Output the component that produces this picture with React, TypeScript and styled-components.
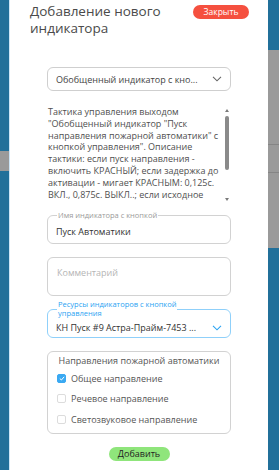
import styled, { createGlobalStyle } from 'styled-components'

const GlobalStyle = createGlobalStyle`
  html, body {
    margin: 0;
    padding: 0;
    background: #21709a;
    font-family: 'Open Sans', 'Noto Sans', sans-serif;
  }
`

const Page = styled.div`
  display: flex;
  width: 279px;
  height: 470px;
  overflow: hidden;
`

const Strip = styled.div<{ $w: number }>`
  display: flex;
  flex-direction: column;
  width: ${({ $w }) => $w}px;
  flex-shrink: 0;
`

const StripSeg = styled.div<{ $h?: number; $grey?: boolean; $line?: boolean }>`
  height: ${({ $h }) => ($h ? `${$h}px` : 'auto')};
  flex: ${({ $h }) => ($h ? '0 0 auto' : '1')};
  background: ${({ $grey }) => ($grey ? '#9a9a9a' : '#21709a')};
  border-top: ${({ $line }) => ($line ? '1px solid #858585' : 'none')};
  box-sizing: border-box;
`

const Panel = styled.div`
  width: 259px;
  flex-shrink: 0;
  background: #fff;
  border-left: 1px solid #cde6f7;
  box-sizing: border-box;
`

const Header = styled.div`
  display: flex;
  justify-content: space-between;
  align-items: flex-start;
  padding: 3px 19px 0 20px;
`

const Title = styled.div`
  font-size: 13.5px;
  line-height: 17px;
  color: #4a4a4a;
`

const CloseButton = styled.button`
  margin-top: 2px;
  width: 56px;
  height: 14px;
  border: none;
  border-radius: 7px;
  background: #f5503f;
  color: #fff;
  font-family: inherit;
  font-size: 8.5px;
  line-height: 14px;
  padding: 0;
`

const Form = styled.div`
  display: flex;
  flex-direction: column;
  padding: 0 37px 0 37px;
`

const Gap = styled.div<{ $h: number }>`
  height: ${({ $h }) => $h}px;
  flex-shrink: 0;
`

const SelectBox = styled.div`
  display: flex;
  align-items: center;
  justify-content: space-between;
  height: 24px;
  box-sizing: border-box;
  border: 1px solid #cfcfcf;
  border-radius: 6px;
  padding: 0 8px 0 8px;
  font-size: 9px;
  color: #444;
`

const SelectText = styled.span`
  white-space: nowrap;
  overflow: hidden;
`

const Chevron = ({ color }: { color: string }) => (
  <svg width="10" height="6" viewBox="0 0 10 6">
    <path d="M1 0.8 L5 4.8 L9 0.8" fill="none" stroke={color} strokeWidth="1.1" />
  </svg>
)

const Tactic = styled.div`
  display: flex;
  height: 95px;
`

const TacticText = styled.div`
  flex: 1;
  overflow: hidden;
  padding: 0 0 0 1px;
  font-size: 9px;
  line-height: 11.8px;
  color: #4f4f4f;
  white-space: nowrap;
`

const Scroll = styled.div`
  display: flex;
  flex-direction: column;
  align-items: center;
  width: 6px;
  margin-right: 1px;
  padding-top: 3px;
`

const Arrow = styled.div<{ $down?: boolean }>`
  width: 0;
  height: 0;
  border-left: 2.5px solid transparent;
  border-right: 2.5px solid transparent;
  ${({ $down }) =>
    $down ? 'border-top: 3px solid #7a7a7a;' : 'border-bottom: 3px solid #7a7a7a;'}
`

const Thumb = styled.div`
  width: 4px;
  height: 54px;
  margin: 4px 0 auto;
  border-radius: 2px;
  background: #8a8a8a;
`

const Outline = styled.fieldset<{ $active?: boolean }>`
  margin: 0;
  padding: 0 8px;
  border: 1px solid ${({ $active }) => ($active ? '#8fd0fa' : '#d2d2d2')};
  border-radius: 6px;
  min-width: 0;
`

const OutlineLabel = styled.legend<{ $blue?: boolean }>`
  padding: 0 1px;
  margin-left: 1px;
  font-size: 7.5px;
  line-height: 9px;
  color: ${({ $blue }) => ($blue ? '#2ba3f2' : '#9a9a9a')};
`

const Field = styled.div<{ $h: number }>`
  display: flex;
  align-items: center;
  justify-content: space-between;
  height: ${({ $h }) => $h}px;
  font-size: 9px;
  color: #333;
`

const CommentBox = styled.div`
  height: 39px;
  box-sizing: border-box;
  border: 1px solid #d2d2d2;
  border-radius: 6px;
  padding: 8px 9px 0;
  font-size: 9px;
  line-height: 13px;
  color: #b5b5b5;
`

const Group = styled.div`
  height: 83px;
  box-sizing: border-box;
  border: 1px solid #d2d2d2;
  border-radius: 6px;
  padding: 2px 9px 0;
`

const GroupTitle = styled.div`
  text-align: center;
  font-size: 9px;
  line-height: 14px;
  color: #555;
  white-space: nowrap;
`

const CheckRow = styled.label`
  display: flex;
  align-items: center;
  gap: 5px;
  height: 20.5px;
  font-size: 9px;
  color: #555;
`

const Box = styled.span<{ $on?: boolean }>`
  width: 9px;
  height: 9px;
  box-sizing: border-box;
  border-radius: 2px;
  border: 1px solid ${({ $on }) => ($on ? '#3aa9f2' : '#dcdcdc')};
  background: ${({ $on }) => ($on ? '#3aa9f2' : '#fff')};
  display: flex;
  align-items: center;
  justify-content: center;
`

const Footer = styled.div`
  display: flex;
  justify-content: center;
`

const AddButton = styled.button`
  width: 61px;
  height: 14px;
  border: none;
  border-radius: 7px;
  background: #8fe57b;
  color: #222;
  font-family: inherit;
  font-size: 9px;
  line-height: 14px;
  padding: 0;
`

const tacticLines = [
  'Тактика управления выходом',
  '"Обобщенный индикатор "Пуск',
  'направления пожарной автоматики" с',
  'кнопкой управления". Описание',
  'тактики: если пуск направления -',
  'включить КРАСНЫЙ; если задержка до',
  'активации - мигает КРАСНЫМ: 0,125с.',
  'ВКЛ., 0,875с. ВЫКЛ..; если исходное',
]

const directions = [
  { name: 'Общее направление', on: true },
  { name: 'Речевое направление', on: false },
  { name: 'Светозвуковое направление', on: false },
]

export default function App() {
  return (
    <>
      <GlobalStyle />
      <Page>
        <Strip $w={9}>
          <StripSeg $h={151} />
          <StripSeg $h={20} $grey />
          <StripSeg />
        </Strip>
        <Panel>
          <Header>
            <Title>
              Добавление нового
              <br />
              индикатора
            </Title>
            <CloseButton>Закрыть</CloseButton>
          </Header>
          <Form>
            <Gap $h={30} />
            <SelectBox>
              <SelectText>Обобщенный индикатор с кно...</SelectText>
              <Chevron color="#666" />
            </SelectBox>
            <Gap $h={15} />
            <Tactic>
              <TacticText>
                {tacticLines.map((l) => (
                  <div key={l}>{l}</div>
                ))}
              </TacticText>
              <Scroll>
                <Arrow />
                <Thumb />
                <Arrow $down />
              </Scroll>
            </Tactic>
            <Gap $h={10} />
            <Outline>
              <OutlineLabel>Имя индикатора с кнопкой</OutlineLabel>
              <Field $h={23}>Пуск Автоматики</Field>
            </Outline>
            <Gap $h={13} />
            <CommentBox>Комментарий</CommentBox>
            <Gap $h={4} />
            <Outline $active>
              <OutlineLabel $blue>
                Ресурсы индикаторов с кнопкой
                <br />
                управления
              </OutlineLabel>
              <Field $h={19}>
                <SelectText>КН Пуск #9 Астра-Прайм-7453 ...</SelectText>
                <Chevron color="#2ba3f2" />
              </Field>
            </Outline>
            <Gap $h={13} />
            <Group>
              <GroupTitle>Направления пожарной автоматики</GroupTitle>
              {directions.map((d) => (
                <CheckRow key={d.name}>
                  <Box $on={d.on}>
                    {d.on && (
                      <svg width="6" height="5" viewBox="0 0 6 5">
                        <path d="M0.8 2.5 L2.4 4 L5.2 0.8" fill="none" stroke="#fff" strokeWidth="1" />
                      </svg>
                    )}
                  </Box>
                  {d.name}
                </CheckRow>
              ))}
            </Group>
            <Gap $h={13} />
            <Footer>
              <AddButton>Добавить</AddButton>
            </Footer>
          </Form>
        </Panel>
        <Strip $w={11}>
          <StripSeg $h={50} />
          <StripSeg $h={94} $grey />
          <StripSeg $h={28} $grey $line />
          <StripSeg $h={76} $grey $line />
          <StripSeg />
        </Strip>
      </Page>
    </>
  )
}
